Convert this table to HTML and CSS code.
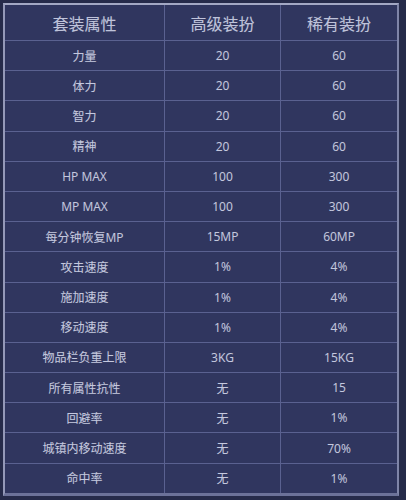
FILE: index.html
```html
<!DOCTYPE html>
<html lang="zh">
<head>
<meta charset="utf-8">
<link rel="stylesheet" href="styles.css">
</head>
<body>
<div class="frame">
  <div class="grid">
    <div class="cell head">套装属性</div><div class="cell head">高级装扮</div><div class="cell head">稀有装扮</div>
    <div class="cell">力量</div><div class="cell">20</div><div class="cell">60</div>
    <div class="cell">体力</div><div class="cell">20</div><div class="cell">60</div>
    <div class="cell">智力</div><div class="cell">20</div><div class="cell">60</div>
    <div class="cell">精神</div><div class="cell">20</div><div class="cell">60</div>
    <div class="cell">HP MAX</div><div class="cell">100</div><div class="cell">300</div>
    <div class="cell">MP MAX</div><div class="cell">100</div><div class="cell">300</div>
    <div class="cell">每分钟恢复MP</div><div class="cell">15MP</div><div class="cell">60MP</div>
    <div class="cell">攻击速度</div><div class="cell">1%</div><div class="cell">4%</div>
    <div class="cell">施加速度</div><div class="cell">1%</div><div class="cell">4%</div>
    <div class="cell">移动速度</div><div class="cell">1%</div><div class="cell">4%</div>
    <div class="cell">物品栏负重上限</div><div class="cell">3KG</div><div class="cell">15KG</div>
    <div class="cell">所有属性抗性</div><div class="cell">无</div><div class="cell">15</div>
    <div class="cell">回避率</div><div class="cell">无</div><div class="cell">1%</div>
    <div class="cell">城镇内移动速度</div><div class="cell">无</div><div class="cell">70%</div>
    <div class="cell">命中率</div><div class="cell">无</div><div class="cell">1%</div>
  </div>
</div>
</body>
</html>
```
FILE: styles.css
```css
html, body {
  margin: 0;
  padding: 0;
}
body {
  width: 406px;
  height: 500px;
  background: #262b4a;
  overflow: hidden;
  font-family: "Open Sans", "Noto Sans CJK SC", sans-serif;
}
.frame {
  margin: 3px 0 0 3px;
  width: 392px;
  border-top: 2px solid #a3a8c4;
  border-left: 2px solid #9499b8;
  border-right: 2px solid #7f85a8;
  border-bottom: 3px solid #6c7299;
  background: #575d8a;
}
.grid {
  display: grid;
  grid-template-columns: 159px 115px 116px;
  grid-template-rows: 35px repeat(15, 29.2px);
  gap: 1px;
  background: #5a6190;
}
.cell {
  background: #30365f;
  color: #c4c8de;
  font-size: 12px;
  display: flex;
  align-items: center;
  justify-content: center;
  text-shadow: 0 0 1px rgba(200, 205, 230, 0.2);
}
.cell.head {
  font-size: 16px;
  color: #bfc3da;
}
```
